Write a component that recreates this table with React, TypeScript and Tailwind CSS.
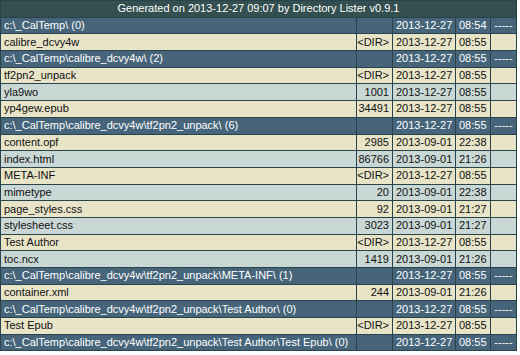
type Row =
  | { kind: 'dir'; path: string; date: string; time: string }
  | { kind: 'file'; name: string; size: string; date: string; time: string }

const base = 'c:\\_CalTemp\\calibre_dcvy4w\\tf2pn2_unpack\\'

const rows: Row[] = [
  { kind: 'dir', path: 'c:\\_CalTemp\\ (0)', date: '2013-12-27', time: '08:54' },
  { kind: 'file', name: 'calibre_dcvy4w', size: '<DIR>', date: '2013-12-27', time: '08:55' },
  { kind: 'dir', path: 'c:\\_CalTemp\\calibre_dcvy4w\\ (2)', date: '2013-12-27', time: '08:55' },
  { kind: 'file', name: 'tf2pn2_unpack', size: '<DIR>', date: '2013-12-27', time: '08:55' },
  { kind: 'file', name: 'yla9wo', size: '1001', date: '2013-12-27', time: '08:55' },
  { kind: 'file', name: 'yp4gew.epub', size: '34491', date: '2013-12-27', time: '08:55' },
  { kind: 'dir', path: base + ' (6)', date: '2013-12-27', time: '08:55' },
  { kind: 'file', name: 'content.opf', size: '2985', date: '2013-09-01', time: '22:38' },
  { kind: 'file', name: 'index.html', size: '86766', date: '2013-09-01', time: '21:26' },
  { kind: 'file', name: 'META-INF', size: '<DIR>', date: '2013-12-27', time: '08:55' },
  { kind: 'file', name: 'mimetype', size: '20', date: '2013-09-01', time: '22:38' },
  { kind: 'file', name: 'page_styles.css', size: '92', date: '2013-09-01', time: '21:27' },
  { kind: 'file', name: 'stylesheet.css', size: '3023', date: '2013-09-01', time: '21:27' },
  { kind: 'file', name: 'Test Author', size: '<DIR>', date: '2013-12-27', time: '08:55' },
  { kind: 'file', name: 'toc.ncx', size: '1419', date: '2013-09-01', time: '21:26' },
  { kind: 'dir', path: base + 'META-INF\\ (1)', date: '2013-12-27', time: '08:55' },
  { kind: 'file', name: 'container.xml', size: '244', date: '2013-09-01', time: '21:26' },
  { kind: 'dir', path: base + 'Test Author\\ (0)', date: '2013-12-27', time: '08:55' },
  { kind: 'file', name: 'Test Epub', size: '<DIR>', date: '2013-12-27', time: '08:55' },
  { kind: 'dir', path: base + 'Test Author\\Test Epub\\ (0)', date: '2013-12-27', time: '08:55' },
]

const cell = 'h-[15.7px] flex items-center px-[3px] whitespace-nowrap overflow-hidden'

export default function App() {
  // alternate file row colours within each directory group
  let idx = 0

  return (
    <div className="w-[520px] h-[355px] bg-white" style={{ fontFamily: '"Liberation Sans", Arial, sans-serif' }}>
      <div className="w-[517px] bg-[#2a434b] p-px text-[11px] leading-none">
        <div className="grid grid-cols-[1fr_35px_62px_34px_25px] gap-px">
          <div className={`${cell} col-span-5 justify-center bg-[#344f4f] text-white`}>
            Generated on 2013-12-27 09:07 by Directory Lister v0.9.1
          </div>

          {rows.map((r, i) => {
            if (r.kind === 'dir') {
              idx = 0
              return (
                <div key={i} className="contents text-white">
                  <div className={`${cell} bg-[#46657a]`}>{r.path}</div>
                  <div className={`${cell} bg-[#46657a]`} />
                  <div className={`${cell} bg-[#46657a]`}>{r.date}</div>
                  <div className={`${cell} bg-[#46657a]`}>{r.time}</div>
                  <div className={`${cell} bg-[#46657a] justify-center`}>-----</div>
                </div>
              )
            }
            const bg = idx++ % 2 === 0 ? 'bg-[#e8e4c8]' : 'bg-[#cad8d5]'
            return (
              <div key={i} className="contents text-[#111]">
                <div className={`${cell} ${bg}`}>{r.name}</div>
                <div className={`${cell} ${bg} justify-end`}>{r.size}</div>
                <div className={`${cell} ${bg}`}>{r.date}</div>
                <div className={`${cell} ${bg}`}>{r.time}</div>
                <div className={`${cell} ${bg}`} />
              </div>
            )
          })}
        </div>
      </div>
    </div>
  )
}
